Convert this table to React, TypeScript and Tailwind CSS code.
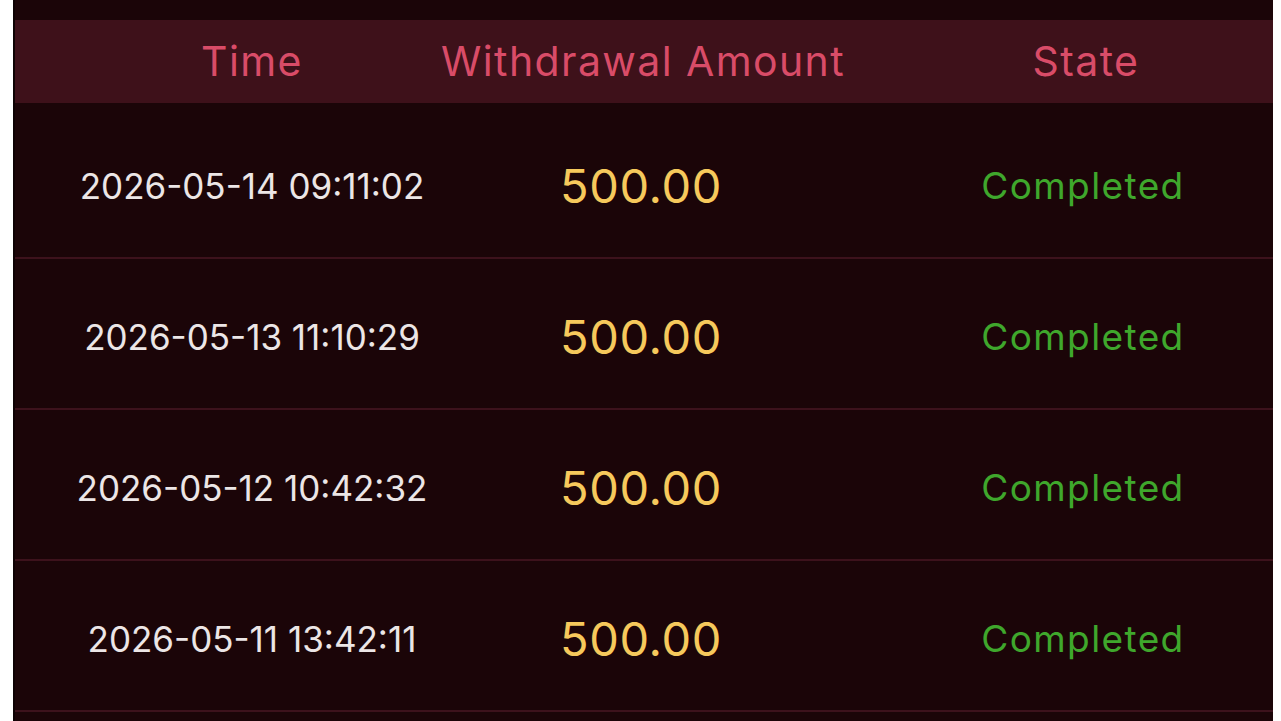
import React from "react";

const rows = [
  { time: "2026-05-14 09:11:02", amount: "500.00", state: "Completed" },
  { time: "2026-05-13 11:10:29", amount: "500.00", state: "Completed" },
  { time: "2026-05-12 10:42:32", amount: "500.00", state: "Completed" },
  { time: "2026-05-11 13:42:11", amount: "500.00", state: "Completed" },
];

export default function App() {
  return (
    <div className="w-[1281px] h-[721px] bg-white overflow-hidden" style={{ fontFamily: "Inter, 'DejaVu Sans', sans-serif" }}>
      <div className="ml-[13px] w-[1260px] h-[721px] bg-[#1b0508] pt-[20px] border-l-2 border-[#0e0204]">
        <div className="grid grid-cols-[474px_308px_1fr] h-[83px] bg-[#3e111a] items-center text-[#d94c68] text-[41px] tracking-[1.4px]">
          <div className="flex justify-center">Time</div>
          <div className="flex justify-center whitespace-nowrap">Withdrawal Amount</div>
          <div className="flex justify-center pl-[102px]">State</div>
        </div>
        <div className="h-[5px]" />
        {rows.map((r, i) => (
          <div key={i} className="grid grid-cols-[474px_308px_1fr] h-[151px] items-center border-b-2 border-[#3d121c] pt-[7px]">
            <div className="flex justify-center text-[#ece6e6] text-[35px] tracking-[0px]">{r.time}</div>
            <div className="flex justify-center text-[#f6c95c] text-[47px] tracking-[0.6px] pr-[4px]">{r.amount}</div>
            <div className="flex justify-center pl-[96px] text-[#3fa72c] text-[37px] tracking-[1.4px]">{r.state}</div>
          </div>
        ))}
      </div>
    </div>
  );
}
